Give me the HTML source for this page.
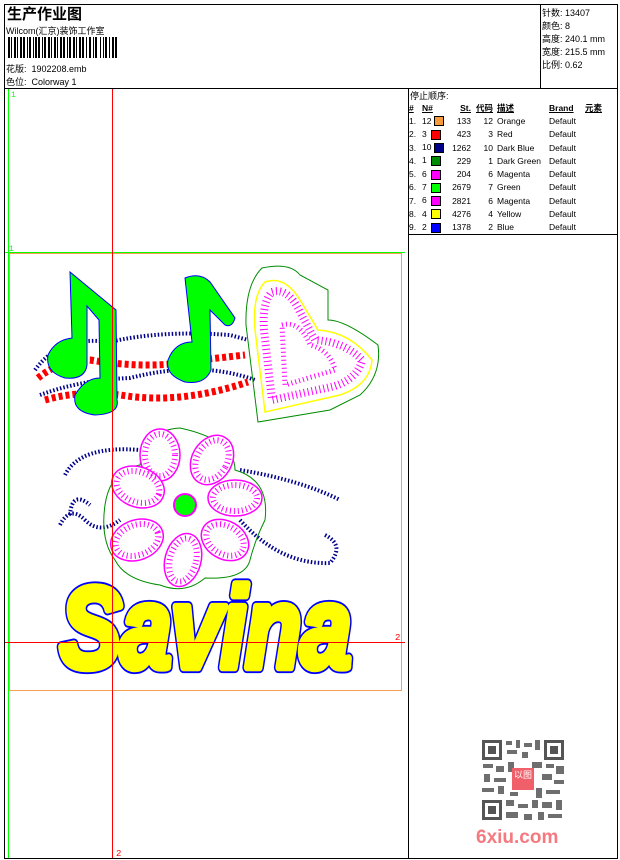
<!DOCTYPE html>
<html><head><meta charset="utf-8"><style>
*{margin:0;padding:0;box-sizing:border-box}
body{width:620px;height:860px;background:#fff;position:relative;overflow:hidden;font-family:"Liberation Sans","Noto Sans CJK SC",sans-serif;font-size:9px;color:#000}
.a{position:absolute;white-space:nowrap}
.l{position:absolute;background:#000}
table{position:absolute;left:409px;top:101px;border-collapse:collapse;font-size:8.5px}
td{height:13.3px;padding:0;white-space:nowrap}
.sw{display:inline-block;width:10px;height:10px;border:1px solid #000;vertical-align:middle}
</style></head><body>
<div class="l" style="left:4px;top:4px;width:614px;height:1px"></div>
<div class="l" style="left:4px;top:858px;width:614px;height:1px"></div>
<div class="l" style="left:4px;top:4px;width:1px;height:855px"></div>
<div class="l" style="left:617px;top:4px;width:1px;height:855px"></div>
<div class="l" style="left:4px;top:88px;width:614px;height:1px"></div>
<div class="l" style="left:540px;top:4px;width:1px;height:85px"></div>
<div class="l" style="left:408px;top:88px;width:1px;height:771px"></div>
<div class="l" style="left:408px;top:234px;width:210px;height:1px"></div>
<div class="a" style="left:7px;top:3px;font-size:15px;font-weight:bold">生产作业图</div>
<div class="a" style="left:6px;top:24px;font-size:9px">Wilcom(汇京)装饰工作室</div>
<svg class="a" style="left:8px;top:37px" width="110" height="21">
<g fill="#000">
<rect x="0" y="0" width="2" height="21"/><rect x="3" y="0" width="1" height="21"/><rect x="6" y="0" width="2" height="21"/><rect x="9" y="0" width="1" height="21"/><rect x="12" y="0" width="2" height="21"/><rect x="15" y="0" width="2" height="21"/><rect x="19" y="0" width="1" height="21"/><rect x="21" y="0" width="2" height="21"/><rect x="25" y="0" width="1" height="21"/><rect x="27" y="0" width="2" height="21"/><rect x="30" y="0" width="2" height="21"/><rect x="34" y="0" width="1" height="21"/><rect x="36" y="0" width="2" height="21"/><rect x="40" y="0" width="2" height="21"/><rect x="43" y="0" width="1" height="21"/><rect x="46" y="0" width="2" height="21"/><rect x="49" y="0" width="1" height="21"/><rect x="52" y="0" width="2" height="21"/><rect x="55" y="0" width="2" height="21"/><rect x="59" y="0" width="1" height="21"/><rect x="61" y="0" width="2" height="21"/><rect x="65" y="0" width="2" height="21"/><rect x="68" y="0" width="1" height="21"/><rect x="71" y="0" width="2" height="21"/><rect x="74" y="0" width="2" height="21"/><rect x="78" y="0" width="1" height="21"/><rect x="81" y="0" width="2" height="21"/><rect x="85" y="0" width="1" height="21"/><rect x="87" y="0" width="2" height="21"/><rect x="92" y="0" width="1" height="21"/><rect x="95" y="0" width="1" height="21"/><rect x="97" y="0" width="2" height="21"/><rect x="101" y="0" width="1" height="21"/><rect x="104" y="0" width="2" height="21"/><rect x="107" y="0" width="2" height="21"/>
</g></svg>
<div class="a" style="left:6px;top:62px">花版:&nbsp; 1902208.emb</div>
<div class="a" style="left:6px;top:75px">色位:&nbsp; Colorway 1</div>
<div class="a" style="left:542px;top:6px">针数: 13407</div>
<div class="a" style="left:542px;top:19px">颜色: 8</div>
<div class="a" style="left:542px;top:32px">高度: 240.1 mm</div>
<div class="a" style="left:542px;top:45px">宽度: 215.5 mm</div>
<div class="a" style="left:542px;top:58px">比例: 0.62</div>
<div class="a" style="left:410px;top:89px">停止顺序:</div>
<table>
<tr style="font-weight:bold;text-decoration:underline"><td style="width:13px">#</td><td style="width:27px">N#</td><td style="width:22px;text-align:right">St.</td><td style="width:22px;text-align:right">代码</td><td style="width:56px;padding-left:4px">描述</td><td style="width:36px">Brand</td><td>元素</td></tr>
<tr><td>1.</td><td>12 <span class="sw" style="background:#f79a3c"></span></td><td style="text-align:right">133</td><td style="text-align:right">12</td><td style="padding-left:4px">Orange</td><td>Default</td><td></td></tr>
<tr><td>2.</td><td>3 &nbsp;<span class="sw" style="background:#f00"></span></td><td style="text-align:right">423</td><td style="text-align:right">3</td><td style="padding-left:4px">Red</td><td>Default</td><td></td></tr>
<tr><td>3.</td><td>10 <span class="sw" style="background:#00008b"></span></td><td style="text-align:right">1262</td><td style="text-align:right">10</td><td style="padding-left:4px">Dark Blue</td><td>Default</td><td></td></tr>
<tr><td>4.</td><td>1 &nbsp;<span class="sw" style="background:#008c00"></span></td><td style="text-align:right">229</td><td style="text-align:right">1</td><td style="padding-left:4px">Dark Green</td><td>Default</td><td></td></tr>
<tr><td>5.</td><td>6 &nbsp;<span class="sw" style="background:#f0f"></span></td><td style="text-align:right">204</td><td style="text-align:right">6</td><td style="padding-left:4px">Magenta</td><td>Default</td><td></td></tr>
<tr><td>6.</td><td>7 &nbsp;<span class="sw" style="background:#0f0"></span></td><td style="text-align:right">2679</td><td style="text-align:right">7</td><td style="padding-left:4px">Green</td><td>Default</td><td></td></tr>
<tr><td>7.</td><td>6 &nbsp;<span class="sw" style="background:#f0f"></span></td><td style="text-align:right">2821</td><td style="text-align:right">6</td><td style="padding-left:4px">Magenta</td><td>Default</td><td></td></tr>
<tr><td>8.</td><td>4 &nbsp;<span class="sw" style="background:#ff0"></span></td><td style="text-align:right">4276</td><td style="text-align:right">4</td><td style="padding-left:4px">Yellow</td><td>Default</td><td></td></tr>
<tr><td>9.</td><td>2 &nbsp;<span class="sw" style="background:#00f"></span></td><td style="text-align:right">1378</td><td style="text-align:right">2</td><td style="padding-left:4px">Blue</td><td>Default</td><td></td></tr>
</table>

<svg class="a" style="left:0;top:0" width="408" height="860">
<line x1="8.5" y1="89" x2="8.5" y2="858" stroke="#0f0"/>
<line x1="5" y1="252.5" x2="405" y2="252.5" stroke="#0f0"/>
<text x="11" y="97" font-size="8" fill="#0f0" font-family="Liberation Mono">1</text>
<text x="9" y="251" font-size="8" fill="#0f0" font-family="Liberation Mono">1</text>
<rect x="9.5" y="253.5" width="392" height="437" fill="none" stroke="#f7a050"/>
<g fill="none" stroke="#00008b" stroke-width="4" stroke-dasharray="1.5 2">
<path d="M35 370 Q60 335 110 342 Q160 330 230 335 L248 340"/>
<path d="M40 395 Q80 380 130 378 Q200 360 255 380"/>
<path d="M65 475 Q80 445 140 450"/>
<path d="M70 515 Q72 490 90 505"/>
<path d="M60 525 Q70 505 85 520 Q100 535 120 520"/>
<path d="M240 470 Q300 480 340 500"/>
<path d="M240 520 Q280 565 330 563 Q345 545 325 535"/>
</g>
<g fill="none" stroke="#f00" stroke-width="7" stroke-dasharray="4 3">
<path d="M38 378 Q60 360 90 360 Q150 370 200 360 L245 355"/>
<path d="M45 400 Q80 390 120 395 Q180 405 248 382"/>
</g>
<g fill="#0f0" stroke="#00f" stroke-width="1">
<path d="M70 272 L116 310 L117 400 Q120 414 95 415 Q72 412 75 395 Q85 378 100 378 L99 320 L87 306 L87 365 Q85 380 65 378 Q45 372 48 355 Q55 340 72 338 Z"/>
<path d="M185 278 Q200 272 210 282 L235 318 Q232 328 225 325 L210 310 L211 370 Q205 385 185 382 Q165 375 168 360 Q175 342 192 342 Z"/>
</g>
<path d="M262 268 Q290 262 300 275 L328 290 L328 320 Q345 320 378 345 Q382 375 360 395 L330 410 L258 422 L246 325 Q245 285 262 268Z" fill="none" stroke="#008c00"/>
<path d="M265 282 Q285 275 300 300 L318 330 Q350 332 372 360 Q370 385 340 395 L265 412 L255 330 Q252 295 265 282Z" fill="none" stroke="#ff0" stroke-width="1.5"/>
<path d="M272 292 Q288 287 300 312 L315 340 Q345 342 362 360 Q358 378 335 386 L272 400 L264 330 Q262 302 272 292Z" fill="none" stroke="#f0f" stroke-width="8" stroke-dasharray="1 3"/>
<path d="M282 325 Q300 320 310 345 Q330 350 335 370 L285 385 Z" fill="none" stroke="#f0f" stroke-width="5" stroke-dasharray="1 3"/>
<path d="M140 465 Q145 430 180 428 Q235 440 235 470 Q270 480 265 520 Q255 540 250 560 Q245 580 205 578 Q185 595 160 585 Q125 580 115 560 Q100 540 105 505 Q110 470 140 465Z" fill="none" stroke="#008c00"/>
<g fill="#fff" stroke="#f0f" stroke-width="1.5">
<ellipse cx="160" cy="455" rx="20" ry="26"/>
<ellipse cx="212" cy="460" rx="20" ry="26" transform="rotate(30 212 460)"/>
<ellipse cx="235" cy="498" rx="27" ry="18"/>
<ellipse cx="225" cy="540" rx="25" ry="19" transform="rotate(30 225 540)"/>
<ellipse cx="183" cy="560" rx="18" ry="27" transform="rotate(15 183 560)"/>
<ellipse cx="137" cy="540" rx="27" ry="20" transform="rotate(-20 137 540)"/>
<ellipse cx="138" cy="487" rx="27" ry="20" transform="rotate(20 138 487)"/>
</g>
<g fill="none" stroke="#f0f" stroke-width="6" stroke-dasharray="1 3">
<ellipse cx="160" cy="455" rx="15" ry="21"/>
<ellipse cx="212" cy="460" rx="15" ry="21" transform="rotate(30 212 460)"/>
<ellipse cx="235" cy="498" rx="22" ry="13"/>
<ellipse cx="225" cy="540" rx="20" ry="14" transform="rotate(30 225 540)"/>
<ellipse cx="183" cy="560" rx="13" ry="22" transform="rotate(15 183 560)"/>
<ellipse cx="137" cy="540" rx="22" ry="15" transform="rotate(-20 137 540)"/>
<ellipse cx="138" cy="487" rx="22" ry="15" transform="rotate(20 138 487)"/>
</g>
<circle cx="185" cy="505" r="11" fill="#0f0" stroke="#f0f" stroke-width="2"/>
<g transform="scale(1,1.25)" font-family="Liberation Sans" font-style="italic" font-weight="bold" font-size="92" letter-spacing="-1">
<text x="60" y="534" fill="#00f" stroke="#00f" stroke-width="9" stroke-linejoin="round">Savina</text>
<text x="60" y="534" fill="#ff0" stroke="#ff0" stroke-width="6" stroke-linejoin="round">Savina</text>
</g>
<line x1="112.5" y1="89" x2="112.5" y2="858" stroke="#f00"/>
<line x1="5" y1="642.5" x2="405" y2="642.5" stroke="#f00"/>
<text x="395" y="640" font-size="9" fill="#f00" font-family="Liberation Mono">2</text>
<text x="116" y="856" font-size="9" fill="#f00" font-family="Liberation Mono">2</text>
</svg>

<svg class="a" style="left:480px;top:738px" width="86" height="84">
<rect width="86" height="84" fill="#fff"/>
<g fill="#555"><rect x="2" y="2" width="20" height="20"/><rect x="64" y="2" width="20" height="20"/><rect x="2" y="62" width="20" height="20"/></g>
<g fill="#fff"><rect x="5" y="5" width="14" height="14"/><rect x="67" y="5" width="14" height="14"/><rect x="5" y="65" width="14" height="14"/></g>
<g fill="#555"><rect x="8" y="8" width="8" height="8"/><rect x="70" y="8" width="8" height="8"/><rect x="8" y="68" width="8" height="8"/></g>
<g fill="#555" opacity=".85">
<rect x="26" y="3" width="6" height="4"/><rect x="36" y="2" width="4" height="8"/><rect x="44" y="5" width="8" height="4"/><rect x="55" y="2" width="5" height="10"/><rect x="27" y="12" width="10" height="4"/><rect x="42" y="14" width="6" height="6"/>
<rect x="3" y="26" width="10" height="4"/><rect x="16" y="28" width="8" height="6"/><rect x="28" y="24" width="6" height="10"/><rect x="52" y="24" width="10" height="6"/><rect x="66" y="26" width="8" height="4"/><rect x="76" y="28" width="8" height="8"/>
<rect x="4" y="36" width="6" height="8"/><rect x="14" y="40" width="12" height="4"/><rect x="62" y="36" width="10" height="6"/><rect x="74" y="42" width="10" height="4"/>
<rect x="2" y="50" width="12" height="4"/><rect x="18" y="48" width="6" height="8"/><rect x="30" y="54" width="8" height="4"/><rect x="56" y="50" width="6" height="10"/><rect x="66" y="52" width="14" height="4"/>
<rect x="26" y="62" width="8" height="6"/><rect x="38" y="66" width="10" height="4"/><rect x="52" y="62" width="6" height="8"/><rect x="62" y="64" width="10" height="6"/><rect x="76" y="62" width="6" height="10"/>
<rect x="26" y="74" width="12" height="6"/><rect x="44" y="76" width="8" height="6"/><rect x="58" y="74" width="6" height="8"/><rect x="68" y="76" width="14" height="4"/>
</g>
<rect x="32" y="30" width="22" height="22" fill="#f0606a"/>
<text x="34" y="40" font-size="9" fill="#fff" font-family="Noto Sans CJK SC,sans-serif">以图</text>
</svg>
<div class="a" style="left:476px;top:827px;font-size:19px;font-weight:bold;color:#f47a80;font-family:'Liberation Sans',sans-serif">6xiu.com</div>
</body></html>
